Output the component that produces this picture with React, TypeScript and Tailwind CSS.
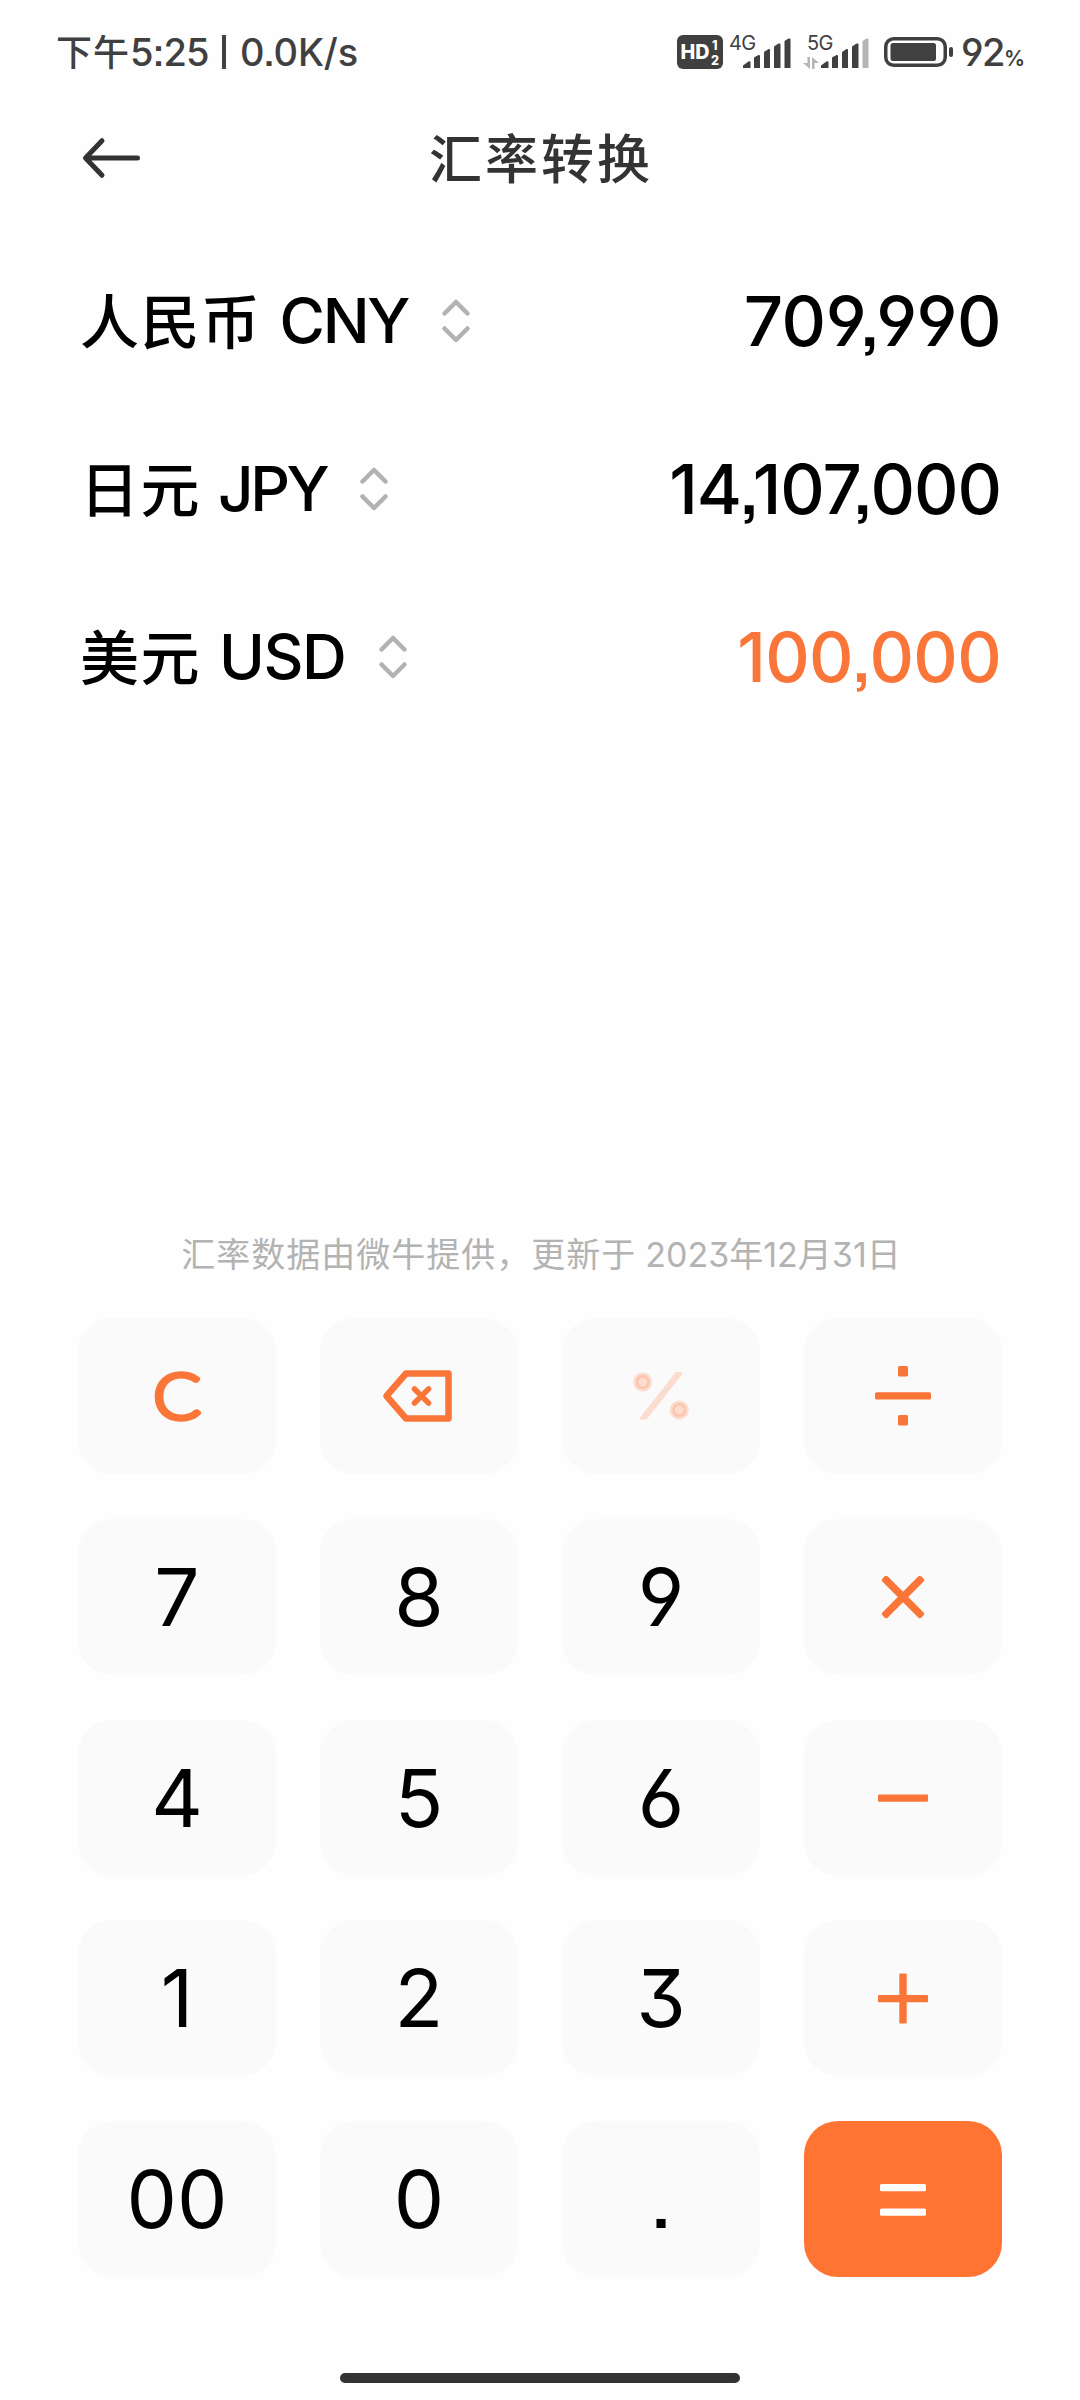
import React from 'react';

const DIGITS = "font-['Inter','Noto_Sans_CJK_SC',sans-serif] [font-feature-settings:'cv03','cv04','cv09','ss07']";

const rates = [
  { name: '人民币', code: 'CNY', value: '709,990', codeClass: 'ml-[18px] tracking-[-2.300px]', valueClass: 'text-black tracking-[-0.500px]' },
  { name: '日元', code: 'JPY', value: '14,107,000', codeClass: 'ml-[17px] tracking-[-3.500px]', valueClass: 'text-black tracking-[-1px]' },
  { name: '美元', code: 'USD', value: '100,000', codeClass: 'ml-[18px] tracking-[-1.500px]', valueClass: 'text-[#f97638] tracking-[-0.700px]' },
];

const SignalBars = ({ weak = false }: { weak?: boolean }) => (
  <svg width="48" height="31" viewBox="0 0 48 31" fill="#404040">
    <path d="M0 30V27.5L5.500 23.500Q7.500 22.500 7.500 24.500V30Z" />
    <path d="M11 30V19.500L15.500 17Q17 16.500 17 18V30Z" />
    <path d="M21 30V14L25.500 11Q27 10.500 27 12V30Z" />
    <path d="M31 30V8.500L35.500 5.500Q37.500 5 37.500 6.500V30Z" />
    <path d="M41.500 30V3L45.500 0.500Q47.500 0 47.500 1.500V30Z" fill={weak ? '#b5b5b5' : '#404040'} />
  </svg>
);

const StatusBar: React.FC = () => (
  <div className="h-[104px] pl-[56px] pr-[55px] flex items-center justify-between text-[#404040] leading-none">
    <div className="flex items-center text-[38px] font-medium">
      <span className="w-[74px] text-[36px] tracking-[1px] pt-[1px]">下午</span>
      <span className="w-[92px] tracking-[-0.8px]">5:25</span>
      <span className="w-[4px] h-[34px] mr-[14px] bg-[#404040]"></span>
      <span className="tracking-[-0.2px]">0.0K/s</span>
    </div>

    <div className="flex items-center">
      {/* HD badge */}
      <svg width="46" height="34" viewBox="0 0 46 34" className="mr-[6px]">
        <rect width="46" height="34" rx="6" fill="#404040" />
        <text x="3.500" y="24" fontSize="20" fontWeight="800" fill="#fff" textLength="29" lengthAdjust="spacingAndGlyphs">HD</text>
        <text x="35" y="14.500" fontSize="12.500" fontWeight="800" fill="#fff">1</text>
        <text x="34" y="30" fontSize="12.500" fontWeight="800" fill="#fff">2</text>
      </svg>

      <div className="relative w-[62px] h-[34px] mr-[12px] flex items-end justify-end">
        <span className="absolute left-0 top-[-3px] text-[20px] leading-[22px] tracking-[-0.5px]">4G</span>
        <SignalBars />
      </div>

      <div className="relative w-[66px] h-[34px] mr-[15px] flex items-end justify-end">
        <span className="absolute left-[4px] top-[-3px] text-[20px] leading-[22px] tracking-[-0.5px]">5G</span>
        <svg width="16" height="12" viewBox="0 0 16 12" className="absolute left-0 bottom-0" fill="#b5b5b5">
          <path d="M4.500 0H7V12L0 6H4.500Z" />
          <path d="M9 0L16 6H11.500V12H9Z" />
        </svg>
        <SignalBars weak />
      </div>

      {/* Battery */}
      <svg width="70" height="30" viewBox="0 0 70 30" className="mr-[7px]">
        <rect x="1.750" y="1.750" width="59.500" height="26.500" rx="8" fill="none" stroke="#404040" strokeWidth="3.500" />
        <rect x="6.500" y="6" width="45.500" height="18" rx="2.500" fill="#404040" />
        <rect x="65" y="10" width="4" height="10" rx="2" fill="#404040" />
      </svg>

      <div className="flex items-baseline">
        <span className="text-[38px] font-medium tracking-[-1.500px]">92</span>
        <span className="text-[21px] font-semibold">%</span>
      </div>
    </div>
  </div>
);

const Header: React.FC = () => (
  <div className="h-[108px] px-[80px] flex items-center">
    <svg width="64" height="44" viewBox="0 0 64 44" fill="none" stroke="#333" strokeWidth="5" strokeLinecap="round" strokeLinejoin="round">
      <path d="M57.500 22H6M22 4.700L5.500 22L22 39.300" />
    </svg>
    <h1 className="flex-1 mr-[62px] pt-[4px] text-center text-[53px] leading-none tracking-[3px] font-medium text-[#333]">汇率转换</h1>
  </div>
);

const Key = ({ children, primary = false }: { children: React.ReactNode; primary?: boolean }) => (
  <button
    className={`h-[156px] rounded-[34px] flex items-center justify-center text-[80px] leading-none text-black ${
      primary ? 'bg-[#ff7433]' : 'bg-[#fafafa]'
    }`}
  >
    {children}
  </button>
);

const Glyph = ({ children }: { children: React.ReactNode }) => (
  <svg width="80" height="80" viewBox="0 0 80 80" fill="#f97638">
    {children}
  </svg>
);

const Keypad: React.FC = () => (
  <div className="px-[78px] grid grid-cols-4 gap-x-[44px] gap-y-[44.75px]">
    <Key>
      <Glyph>
        <text
          x="16"
          y="62.500"
          className="font-['Lato',sans-serif]"
          fontSize="64"
          fontWeight="300"
          textLength="48"
          lengthAdjust="spacingAndGlyphs"
          stroke="#f97638"
          strokeWidth="4.500"
          strokeLinejoin="round"
        >
          C
        </text>
      </Glyph>
    </Key>
    <Key>
      <Glyph>
        <g fill="none" stroke="#f97638" strokeLinecap="round" strokeLinejoin="round">
          <path d="M7.500 40L27 17.500H69.500V62.500H27Z" strokeWidth="6.500" />
          <path d="M35.500 33L49.500 47M49.500 33L35.500 47" strokeWidth="5.500" />
        </g>
      </Glyph>
    </Key>
    <Key>
      {/* percent is disabled here */}
      <Glyph>
        <g fill="#ff7433" fillOpacity="0.220" stroke="#ff7433" strokeOpacity="0.220">
          <circle cx="21.700" cy="26" r="7" strokeWidth="5" />
          <circle cx="58.300" cy="54" r="7" strokeWidth="5" />
          <path d="M19 63.500H25.500L61.500 18L60.500 16H55L19 61.500Z" stroke="none" />
        </g>
      </Glyph>
    </Key>
    <Key>
      <Glyph>
        <rect x="12" y="36.200" width="56" height="7.300" rx="1.500" />
        <rect x="35" y="10" width="10" height="10.500" rx="1.500" />
        <rect x="35" y="59" width="10" height="10.500" rx="1.500" />
      </Glyph>
    </Key>

    <Key>7</Key>
    <Key>8</Key>
    <Key>9</Key>
    <Key>
      <Glyph>
        <rect x="12.500" y="36.300" width="55" height="7.400" rx="2" transform="rotate(45 40 40)" />
        <rect x="12.500" y="36.300" width="55" height="7.400" rx="2" transform="rotate(-45 40 40)" />
      </Glyph>
    </Key>

    <Key>4</Key>
    <Key>5</Key>
    <Key>6</Key>
    <Key>
      <Glyph>
        <rect x="15" y="36.500" width="50" height="7.200" rx="1" />
      </Glyph>
    </Key>

    <Key>1</Key>
    <Key>2</Key>
    <Key>3</Key>
    <Key>
      <Glyph>
        <rect x="15" y="37" width="50" height="7.200" rx="1" />
        <rect x="36.300" y="15.500" width="7.400" height="50" rx="1" />
      </Glyph>
    </Key>

    <Key>00</Key>
    <Key>0</Key>
    <Key>.</Key>
    <Key primary>
      <Glyph>
        <rect x="17" y="25" width="46" height="7.300" rx="1.500" fill="#fff" />
        <rect x="17" y="49.500" width="46" height="7.300" rx="1.500" fill="#fff" />
      </Glyph>
    </Key>
  </div>
);

const App: React.FC = () => {
  return (
    <div lang="zh-CN" className={`w-[1080px] h-[2400px] bg-[#fefefe] overflow-hidden flex flex-col ${DIGITS}`}>
      <StatusBar />
      <Header />

      {/* Currency rows */}
      <div className="pt-[25px] pl-[80px] pr-[79px]">
        {rates.map((r) => (
          <div key={r.code} className="h-[168px] flex items-center justify-between leading-none font-medium">
            <div className="flex items-center text-black">
              <span className="pt-[2px] text-[59px] tracking-[1.500px]">{r.name}</span>
              <span className={`text-[62px] ${r.codeClass}`}>{r.code}</span>
              <svg width="30" height="46" viewBox="0 0 30 46" className="ml-[33px]" fill="none" stroke="#b2b2b2" strokeWidth="4.500" strokeLinecap="round" strokeLinejoin="round">
                <path d="M3.500 15.500L15 4L26.500 15.500M3.500 30.500L15 42L26.500 30.500" />
              </svg>
            </div>
            <span className={`text-[69px] ${r.valueClass}`}>{r.value}</span>
          </div>
        ))}
      </div>

      <div className="mt-auto h-[64px] mb-[31px] pl-[2px] flex items-center justify-center text-[34px] leading-none text-[#b3b3b3]">
        <span className="tracking-[1px]">汇率数据由微牛提供，更新于</span>
        <span className="ml-[9px]">2023</span>年<span>12</span>月<span>31</span>日
      </div>

      <Keypad />

      <div className="mt-[96px] mb-[17px] mx-auto w-[400px] h-[10px] shrink-0 rounded-full bg-[#333]"></div>
    </div>
  );
};

export default App;
